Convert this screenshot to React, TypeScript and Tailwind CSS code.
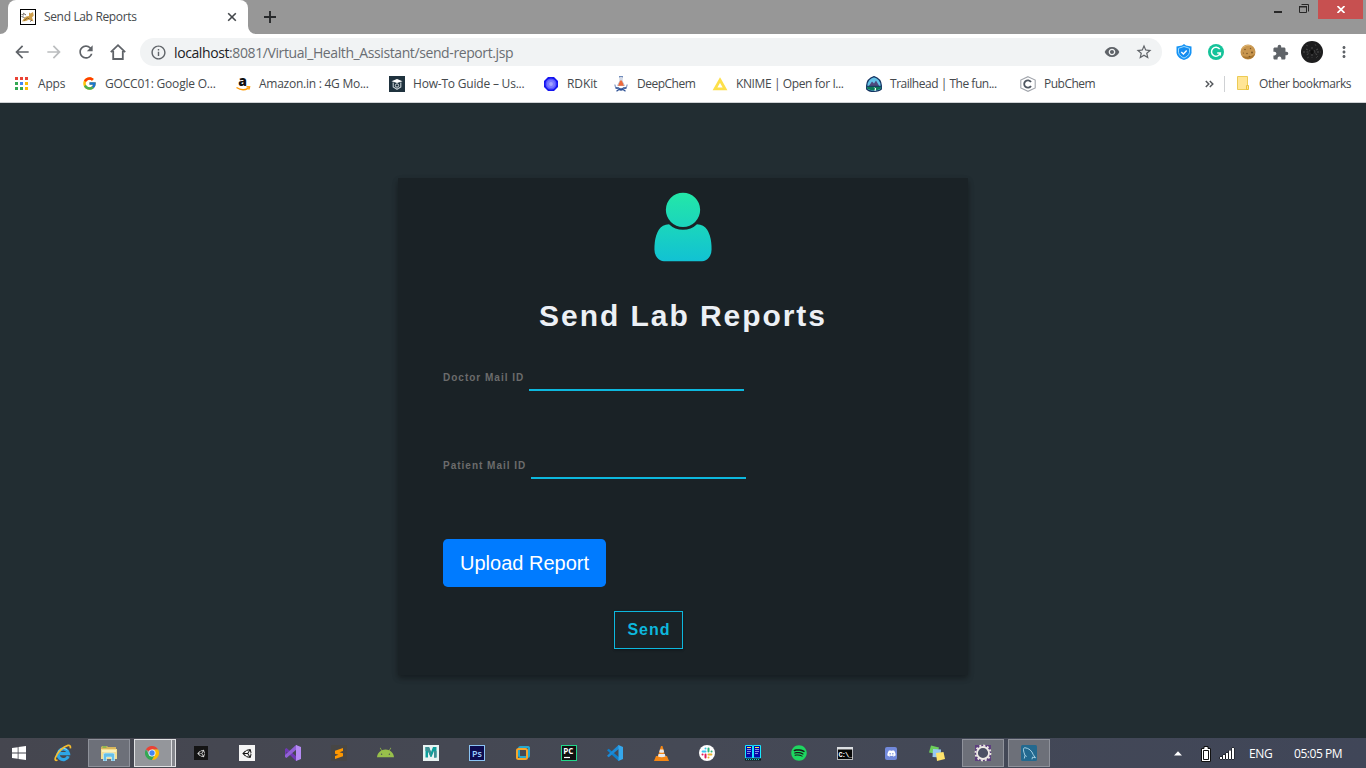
import type { ReactNode } from "react";
import {
  MdArrowBack,
  MdArrowForward,
  MdRefresh,
  MdInfoOutline,
  MdRemoveRedEye,
  MdStarBorder,
  MdExtension,
  MdMoreVert,
} from "react-icons/md";
import { FcGoogle } from "react-icons/fc";
import { FaAndroid, FaDiscord, FaSpotify, FaUnity } from "react-icons/fa";

/* ---------- browser chrome ---------- */

function TomcatIcon() {
  return (
    <svg width="16" height="16" viewBox="0 0 16 16" className="shrink-0">
      <rect x="0.5" y="0.5" width="15" height="15" fill="#fff" stroke="#000" />
      <path d="M2 12.500l1.500-2.500 2.500-2.500 3-.5V3.500l1.500 1L13 3l.7 3.500-1.700 2 1.500 4-2.500-1-2-1-3 1.500z" fill="#cf9f4c" />
      <path d="M1.500 5.500l2.500.5M1.500 7.500l3 1M10 12.500l2-1.500M3 4l3 2" stroke="#5a5148" strokeWidth="0.9" />
      <path d="M4 11.500l3.500-2.500 2 1" stroke="#7d5c22" strokeWidth="0.9" fill="none" />
    </svg>
  );
}

function TabStrip() {
  return (
    <div className="flex h-[34px] bg-[#979797]">
      <svg width="8" height="34" className="shrink-0">
        <path d="M0 34a8 8 0 0 0 8-8v8z" fill="#fff" />
      </svg>
      <div className="flex h-[34px] w-[240px] shrink-0 items-center rounded-t-lg bg-white pl-3">
        <TomcatIcon />
        <span className="ml-2 w-[183px] text-[12px] tracking-[-0.35px] text-[#45494d]">Send Lab Reports</span>
        <svg width="10" height="10" viewBox="0 0 10 10" className="shrink-0">
          <path d="M1.200 1.200l7.600 7.600M8.800 1.200L1.200 8.800" stroke="#43474b" strokeWidth="1.6" />
        </svg>
      </div>
      <svg width="8" height="34" className="shrink-0">
        <path d="M0 26a8 8 0 0 0 8 8H0z" fill="#fff" />
      </svg>
      <svg width="12" height="12" viewBox="0 0 12 12" className="mt-[11px] ml-2 shrink-0">
        <path d="M6 0v12M0 6h12" stroke="#27292b" strokeWidth="1.9" />
      </svg>
      <div className="ml-auto flex pr-[3px]">
        <svg width="44" height="20" viewBox="0 0 44 20">
          <path d="M0 11h8v2H0z" fill="#272727" />
          <path d="M25.500 6.500h7v6h-7zM27.500 4.500h7v7" fill="none" stroke="#272727" />
          <path d="M25 6h8v1.500h-8z" fill="#272727" />
        </svg>
        <div className="flex h-[19px] w-[45px] items-center justify-center bg-[#c75050]">
          <svg width="8" height="7" viewBox="0 0 8 7">
            <path d="M.5 0l7 7M7.500 0l-7 7" stroke="#fff" strokeWidth="1.7" />
          </svg>
        </div>
      </div>
    </div>
  );
}

function ShieldIcon() {
  return (
    <svg width="16" height="16" viewBox="0 0 16 16">
      <path d="M8 0l2 1.500 5.500 1V9c-1 4-4 6-7.500 7C4.500 15 1.500 13 .5 9V2.500l5.500-1z" fill="#1593f5" />
      <path d="M8 2.500l5.500 1.800V8.500c-.8 3-3 4.500-5.500 5.500-2.500-1-4.700-2.500-5.500-5.500V4.300z" fill="#158cf0" stroke="#a8e2ff" strokeWidth="0.9" />
      <path d="M5.300 8l2.100 2 3.300-3.500" stroke="#fff" strokeWidth="1.400" fill="none" />
    </svg>
  );
}

function CookieIcon() {
  return (
    <svg width="16" height="16" viewBox="0 0 16 16">
      <circle cx="8" cy="8" r="7.500" fill="#c8964f" />
      <path d="M1 6a7.500 7.500 0 0 1 12-3 9 9 0 0 0-12 3z" fill="#e2ba77" />
      <path d="M2 12a7.500 7.500 0 0 0 13-2q-5 4-13 2z" fill="#a8752f" />
      <g fill="#7d5726">
        <circle cx="5" cy="5.500" r="0.800" />
        <circle cx="10.500" cy="4.500" r="0.700" />
        <circle cx="12" cy="8.500" r="1" />
        <circle cx="7" cy="9.500" r="0.800" />
        <circle cx="3.500" cy="9" r="0.600" />
        <circle cx="9.500" cy="12.500" r="0.800" />
      </g>
    </svg>
  );
}

function Toolbar() {
  return (
    <div className="flex h-9 items-center bg-white pl-3">
      <MdArrowBack size={20} color="#5f6368" />
      <MdArrowForward size={20} color="#bbbdbf" className="ml-3" />
      <MdRefresh size={20} color="#5f6368" className="ml-3" />
      <svg width="20" height="20" viewBox="0 0 20 20" className="ml-3">
        <path d="M2.800 10.200L10 3.200l7.200 7M5.200 9v8h9.600V9" fill="none" stroke="#5f6368" strokeWidth="1.800" />
      </svg>
      <div className="ml-3 flex h-7 w-[1022px] shrink-0 items-center rounded-full bg-[#f1f3f4] pl-[10px]">
        <MdInfoOutline size={17} color="#5f6368" className="shrink-0" />
        <span className="ml-[7px] w-[930px] shrink-0 text-[14px] whitespace-nowrap tracking-[-0.4px] text-[#6a6e73]">
          <span className="text-[#202124]">localhost</span>:8081/Virtual_Health_Assistant/send-report.jsp
        </span>
        <MdRemoveRedEye size={16} color="#5f6368" className="shrink-0" />
        <MdStarBorder size={18} color="#5f6368" className="ml-[15px] shrink-0" />
      </div>
      <div className="ml-[14px] flex items-center gap-4">
        <ShieldIcon />
        <svg width="16" height="16" viewBox="0 0 16 16">
          <circle cx="8" cy="8" r="8" fill="#15c39a" />
          <path d="M11.700 5.200A4.500 4.500 0 1 0 12.300 9H9.200M12.300 8.800v2.700" fill="none" stroke="#fff" strokeWidth="1.500" />
        </svg>
        <CookieIcon />
        <MdExtension size={17} color="#5f6368" />
      </div>
      <svg width="22" height="22" viewBox="0 0 22 22" className="ml-3">
        <circle cx="11" cy="11" r="11" fill="#1d1d1e" />
        <g stroke="#5c5c5c" strokeWidth="0.800">
          <path d="M2 11h18M11 6v11M5 8l12 6M17 8L5 14" strokeDasharray="2 1.500" />
        </g>
        <circle cx="11" cy="11" r="2" fill="#0c0c0c" />
        <path d="M5 4l2 1M14 3l1 2M6 17l2-1M15 17l2-2" stroke="#3b3b3b" />
      </svg>
      <MdMoreVert size={18} color="#5f6368" className="ml-[12px]" />
    </div>
  );
}

function AppsIcon() {
  const colors = ["#ea4335", "#ea4335", "#ea4335", "#34a853", "#4285f4", "#fbbc04", "#34a853", "#34a853", "#fbbc04"];
  return (
    <svg width="16" height="16" viewBox="0 0 16 16">
      {colors.map((c, i) => (
        <rect key={i} x={1 + (i % 3) * 5} y={1 + Math.floor(i / 3) * 5} width="3" height="3" fill={c} />
      ))}
    </svg>
  );
}

function AmazonIcon() {
  return (
    <svg width="16" height="16" viewBox="0 0 16 16" className="overflow-visible">
      <text x="3.200" y="9.500" fontSize="14" fontWeight="800" fontFamily="Open Sans, sans-serif" fill="#111">
        a
      </text>
      <path d="M1.500 11.500q6 4 11.500.8M11.500 10.700l3 .2-.8 2.600" fill="none" stroke="#f90" strokeWidth="1.500" />
    </svg>
  );
}

function HowToIcon() {
  return (
    <svg width="16" height="16" viewBox="0 0 16 16">
      <rect width="16" height="16" fill="#1f323e" />
      <path d="M2.500 5.200L8 3l5.500 2.200L8 7z" fill="#fff" />
      <path d="M4.200 6.500V11L8 13.300l3.800-2.300V6.500" fill="none" stroke="#c5cfd4" strokeWidth="1.100" />
      <circle cx="8" cy="9.500" r="1.700" fill="none" stroke="#d5dde1" strokeWidth="1" />
    </svg>
  );
}

function RdkitIcon() {
  return (
    <svg width="16" height="16" viewBox="0 0 16 16">
      <path d="M5 1h6l4 4v6l-4 4H5l-4-4V5z" fill="#1414f0" />
      <circle cx="8" cy="8" r="5.500" fill="#5555ff" />
      <circle cx="8" cy="8" r="4" fill="#7878ff" />
      <circle cx="8" cy="8" r="1.900" fill="#a4a4ff" />
    </svg>
  );
}

function DeepChemIcon() {
  return (
    <svg width="16" height="16" viewBox="0 0 16 16">
      <path d="M6 .8h4" stroke="#4b6eac" strokeWidth="1.200" />
      <path d="M7 1v4L4.500 9.500h7L9 5V1" fill="#eef1f6" stroke="#a9b5cb" strokeWidth="0.800" />
      <path d="M7.200 4.500L5 9.800h6L8.800 4.500z" fill="#ee6a3c" />
      <path d="M1.800 8.500q.5 3.500 3 4.500M14.200 8.500q-.5 3.500-3 4.500" fill="none" stroke="#8ea3c9" strokeWidth="1.300" />
      <path d="M2.500 12h3q2.500 2 5 0h3M3.500 15.200l2.500-1.700q2 1 4 0l2.500 1.700" fill="none" stroke="#2e5296" strokeWidth="1.300" />
    </svg>
  );
}

function KnimeIcon() {
  return (
    <svg width="16" height="16" viewBox="0 0 16 16">
      <path d="M8 4l5 8.800H3z" fill="#fff" stroke="#fde04a" strokeWidth="2.800" />
    </svg>
  );
}

function TrailheadIcon() {
  return (
    <svg width="16" height="16" viewBox="0 0 16 16">
      <path d="M.7 13V9.500C1 5 4 2 8 .7c4 1.300 7 4.300 7.300 8.800V13q-2 2.200-7.300 2.300T.7 13z" fill="#64c2e8" stroke="#143462" strokeWidth="1.300" />
      <path d="M2.500 10.500L6 5.500l2 2 2-3 3.500 6z" fill="#4f4a7e" />
      <path d="M1.200 10.500q7-1 13.600 0v2.300q-6.500 3.500-13.600 0z" fill="#0b7b57" />
      <path d="M1 10.300h14" stroke="#143462" strokeWidth="1" />
      <path d="M7.500 11l1.500 1.500-.7 2.300h1.500l.3-2.600z" fill="#fff" />
    </svg>
  );
}

function PubChemIcon() {
  return (
    <svg width="16" height="16" viewBox="0 0 16 16">
      <path d="M8 .7l7.200 3.300v8l-7.200 3.300L.8 12V4z" fill="none" stroke="#a0a4ab" strokeWidth="1.100" />
      <path d="M11 6A3.700 3.700 0 1 0 11 10" fill="none" stroke="#4e5661" strokeWidth="1.800" />
    </svg>
  );
}

function Bookmark({ icon, className, label }: { icon: ReactNode; className: string; label: string }) {
  return (
    <div className={`flex shrink-0 items-center gap-2 whitespace-nowrap ${className}`}>
      <span className="flex size-4 shrink-0 items-center justify-center">{icon}</span>
      <span>{label}</span>
    </div>
  );
}

function BookmarksBar() {
  return (
    <div className="flex h-[33px] items-center border-b border-[#cfd1d4] bg-white pb-[5px] pl-[14px] text-[12px] text-[#45494d]">
      <Bookmark icon={<AppsIcon />} className="w-[67px] tracking-[-0.2px]" label="Apps" />
      <Bookmark icon={<FcGoogle size={15} />} className="w-[154px] tracking-[-0.2px]" label="GOCC01: Google O..." />
      <Bookmark icon={<AmazonIcon />} className="w-[154px] tracking-[-0.25px]" label="Amazon.in : 4G Mo..." />
      <Bookmark icon={<HowToIcon />} className="w-[154px] tracking-[-0.2px]" label="How-To Guide – Us..." />
      <Bookmark icon={<RdkitIcon />} className="w-[70px] tracking-[-0.1px]" label="RDKit" />
      <Bookmark icon={<DeepChemIcon />} className="w-[99px] tracking-[-0.5px]" label="DeepChem" />
      <Bookmark icon={<KnimeIcon />} className="w-[154px] tracking-[-0.4px]" label="KNIME | Open for I..." />
      <Bookmark icon={<TrailheadIcon />} className="w-[154px] tracking-[-0.48px]" label="Trailhead | The fun..." />
      <Bookmark icon={<PubChemIcon />} className="w-[185px] tracking-[-0.5px]" label="PubChem" />
      <svg width="9" height="8" viewBox="0 0 9 8" className="shrink-0">
        <path d="M.8 1l3 3-3 3M4.800 1l3 3-3 3" fill="none" stroke="#55595d" strokeWidth="1.500" />
      </svg>
      <div className="ml-[10px] h-4 w-px shrink-0 bg-[#cfd1d4]" />
      <Bookmark
        icon={
          <svg width="14" height="15" viewBox="0 0 14 15">
            <path d="M1.500.5h10v13h-10z" fill="#ffe595" stroke="#eccb55" />
            <path d="M10.500 9.500h2v4h-2z" fill="#ffe595" stroke="#e8c03a" />
          </svg>
        }
        className="ml-[10px] tracking-[-0.43px]"
        label="Other bookmarks"
      />
    </div>
  );
}

/* ---------- page ---------- */

function UserIcon() {
  return (
    <svg width="80" height="80" viewBox="0 0 1792 1792">
      <defs>
        <linearGradient id="userFill" gradientUnits="userSpaceOnUse" x1="0" y1="-186" x2="0" y2="2054">
          <stop offset="0" stopColor="#27ef9f" />
          <stop offset="1" stopColor="#0db8de" />
        </linearGradient>
      </defs>
      <path
        fill="url(#userFill)"
        d="M1536 1399q0 109-62.500 187t-150.500 78h-854q-88 0-150.500-78t-62.500-187q0-85 8.500-160.500t31.500-152 58.500-131 94-89 134.500-34.500q131 128 313 128t313-128q76 0 134.500 34.500t94 89 58.500 131 31.500 152 8.500 160.500zm-256-887q0 159-112.500 271.500t-271.500 112.500-271.500-112.500-112.500-271.500 112.500-271.500 271.500-112.500 271.500 112.500 112.500 271.500z"
      />
    </svg>
  );
}

function Field({ id, label }: { id: string; label: string }) {
  return (
    <div className="flex h-[88px] items-start">
      <label htmlFor={id} className="pt-[11px] text-[10px] leading-[15px] font-bold tracking-[1px] whitespace-nowrap text-[#6c6c6c]">
        {label}
      </label>
      <input id={id} type="text" className="ml-[5px] h-8 w-[215px] border-b-2 border-[#0db8de] bg-transparent outline-none" />
    </div>
  );
}

function Page() {
  return (
    <main className="flex h-[635px] justify-center bg-[#222d32] pt-[75px] font-['Liberation_Sans',Arial,sans-serif]">
      <section className="flex h-[497px] w-[570px] flex-col bg-[#1a2226] shadow-[0_3px_6px_rgba(0,0,0,0.16),0_3px_6px_rgba(0,0,0,0.23)]">
        <div className="flex h-[100px] justify-center pt-[8.5px]">
          <UserIcon />
        </div>
        <h1 className="mt-[15px] text-center text-[30px] leading-[45px] font-bold tracking-[1.95px] text-[#ecf0f5]">Send Lab Reports</h1>
        <form className="mt-[21px] flex flex-col items-start pl-[45px]">
          <Field id="doctor" label="Doctor Mail ID" />
          <Field id="patient" label="Patient Mail ID" />
          <button type="button" className="mt-[4px] h-12 w-[163px] rounded-[4.8px] bg-[#007bff] text-[20px] leading-[30px] whitespace-nowrap text-white">
            Upload Report
          </button>
          <button
            type="button"
            className="mt-6 ml-[171px] h-[38px] w-[69px] border border-[#0db8de] pl-px text-[16px] font-bold tracking-[1px] text-[#0db8de] shadow-[0_1px_3px_rgba(0,0,0,0.12),0_1px_2px_rgba(0,0,0,0.24)]"
          >
            Send
          </button>
        </form>
      </section>
    </main>
  );
}

/* ---------- taskbar ---------- */

function WindowsIcon() {
  return (
    <svg width="14" height="14" viewBox="0 0 14 14">
      <path d="M0 2l5.700-.8v5.400H0zM6.500 1.100L14 0v6.600H6.500zM0 7.400h5.700v5.400L0 12zM6.500 7.400H14V14l-7.500-1.100z" fill="#fff" />
    </svg>
  );
}

function ExplorerBrowserIcon() {
  return (
    <svg width="18" height="18" viewBox="0 0 18 18">
      <path d="M14.300 12.200A5.300 5.300 0 1 1 14.600 9.600H5.500" fill="none" stroke="#2ea6e6" strokeWidth="3.200" />
      <path d="M4.300 8A5.300 5.300 0 0 1 13.300 6.200" fill="none" stroke="#90dcfb" strokeWidth="1" />
      <path d="M3.500 16Q.3 17.200 1.500 13.500M1.500 13.500C3 9 9 2.500 14 1.400q3-.5 2.300 3" fill="none" stroke="#f5bd2f" strokeWidth="1.700" />
    </svg>
  );
}

function FolderIcon() {
  return (
    <svg width="18" height="16" viewBox="0 0 18 16">
      <path d="M1 2.500L2 1h5l1 1h8v11H1z" fill="#d8b65c" />
      <path d="M2.500 1.500h4v1h-4z" fill="#47b64b" />
      <path d="M1 4h16v10H1z" fill="#f4de90" />
      <path d="M2 5h14v2H2z" fill="#fbf0ba" />
      <path d="M3.500 16V9.500q0-1.500 1.500-1.500h8q1.500 0 1.500 1.500V16h-3v-4h-5v4z" fill="#65bfe8" stroke="#c4edff" strokeWidth="0.700" />
    </svg>
  );
}

function ChromeIcon() {
  return (
    <svg width="14" height="14" viewBox="0 0 48 48">
      <path d="M24 24L3.200 12A24 24 0 0 1 44.800 12H24z" fill="#ea4335" />
      <path d="M24 48A24 24 0 0 1 3.200 12L13.600 30 24 36l10.400-6z" fill="#34a853" />
      <path d="M24 12h20.800A24 24 0 0 1 24 48l10.400-18z" fill="#fbbc05" />
      <circle cx="24" cy="24" r="12" fill="#fff" />
      <circle cx="24" cy="24" r="9.300" fill="#4285f4" />
    </svg>
  );
}

function VisualStudioIcon() {
  return (
    <svg width="16" height="16" viewBox="0 0 16 16">
      <path d="M0 4l1.500-1L12 12v3.500L11 16 1.500 6.500v4L0 12z" fill="#6f38b4" />
      <path d="M0 12l1.500 1L12 4V.3L11 0 0 10z" fill="#9160d6" />
      <path d="M11 0l5 2v12l-5 2z" fill="#b58af3" />
    </svg>
  );
}

function SublimeIcon() {
  return (
    <svg width="16" height="16" viewBox="0 0 16 16">
      <rect width="16" height="16" rx="1" fill="#474645" />
      <path d="M4 5.700L12 3v3L8.500 7.200 12 8.300v3L4 14v-3l3.500-1.200L4 8.700z" fill="#ff9800" />
    </svg>
  );
}

function MayaIcon() {
  return (
    <svg width="16" height="16" viewBox="0 0 16 16">
      <rect width="16" height="16" fill="#e8f3f2" />
      <path d="M2.500 2H6l2 5 2-5h3.500v10.500H11V6l-2.500 6h-1L5 6v6.500H2.500z" fill="#0c9f9b" />
      <path d="M2.500 2H6l2 5-.5 5L5 6H2.500zM11 6h2.500v6.500H11z" fill="#3f8f93" />
    </svg>
  );
}

function PhotoshopIcon() {
  return (
    <svg width="16" height="16" viewBox="0 0 16 16">
      <rect x="0.500" y="0.500" width="15" height="15" fill="#0c0c50" stroke="#8bc4f5" />
      <text x="3" y="11.500" fontSize="9" fontWeight="600" fontFamily="Open Sans, sans-serif" fill="#9bd0ff">
        Ps
      </text>
    </svg>
  );
}

function VmwareIcon() {
  return (
    <svg width="16" height="16" viewBox="0 0 16 16" fill="none">
      <rect x="4" y="2" width="10" height="10" rx="1.500" stroke="#25a8cf" strokeWidth="2" />
      <rect x="2" y="4" width="10" height="10" rx="1.500" stroke="#f5a52a" strokeWidth="2" />
      <path d="M7 2h5.500Q14 2 14 3.500V9" stroke="#25a8cf" strokeWidth="2" />
    </svg>
  );
}

function PyCharmIcon() {
  return (
    <svg width="16" height="16" viewBox="0 0 16 16">
      <rect x="0.500" y="0.500" width="15" height="15" fill="#101010" stroke="#21d789" />
      <text x="2.300" y="9" fontSize="8" fontWeight="700" fontFamily="Open Sans, sans-serif" fill="#fff">
        PC
      </text>
      <path d="M3 12.500h6" stroke="#fff" strokeWidth="1.200" />
    </svg>
  );
}

function CodeIcon() {
  return (
    <svg width="16" height="16" viewBox="0 0 16 16">
      <path d="M0 5.300l1.700-1.500L12 12.200V16h-.5z" fill="#0f7fcb" />
      <path d="M0 10.700l1.700 1.500L12 3.800V0h-.5z" fill="#1c8ad6" />
      <path d="M11.500 0L16 2v12l-4.500 2z" fill="#35a7ec" />
    </svg>
  );
}

function VlcIcon() {
  return (
    <svg width="15" height="17" viewBox="0 0 15 17">
      <path d="M2 11h11l2 5H0z" fill="#f58714" />
      <path d="M7 1h1.500l3 11.500q-4 1.800-8 0z" fill="#f58714" />
      <path d="M5.900 4.500h3.500l.8 2.700q-2.500 1-5 0zM4.600 9h6.300l.6 2.500q-3.800 1.500-7.500 0z" fill="#e9e9ec" />
    </svg>
  );
}

function SlackIcon() {
  return (
    <svg width="16" height="16" viewBox="0 0 16 16">
      <circle cx="8" cy="8" r="8" fill="#fff" />
      <g strokeWidth="2" strokeLinecap="round">
        <path d="M6.500 3.500v.1M3.600 6.500h2.900" stroke="#36c5f0" />
        <path d="M9.500 3.600v2.900M12.500 6.500h.1" stroke="#2eb67d" />
        <path d="M9.500 9.500h2.900M9.500 12.500v.1" stroke="#ecb22e" />
        <path d="M3.500 9.500h.1M6.500 9.500v2.900" stroke="#e01e5a" />
      </g>
    </svg>
  );
}

function BookIcon() {
  return (
    <svg width="16" height="16" viewBox="0 0 16 16">
      <path d="M.5.500h7v12.500h-7zM8.500.500h7v12.500h-7z" fill="#0808a8" stroke="#18e8ff" />
      <path d="M2 2.500h4M10 2.500h4" stroke="#ffef3a" />
      <path d="M2 4.500h4M2 6.500h4M2 8.500h3M10 4.500h4M10 6.500h4M10 8.500h3" stroke="#9fb4f0" strokeWidth="0.800" />
      <path d="M0 14.500h16" stroke="#081818" strokeWidth="2" />
      <path d="M1 14.500h14" stroke="#18c8d0" strokeDasharray="1 1" />
    </svg>
  );
}

function TerminalIcon() {
  return (
    <svg width="16" height="13" viewBox="0 0 16 13">
      <rect x="0.500" y="0.500" width="15" height="12" fill="#050505" stroke="#b4b6ba" />
      <path d="M0 0h16v2.500H0z" fill="#dcdfe3" />
      <text x="1.500" y="9.500" fontSize="7" fontWeight="700" fontFamily="Liberation Mono, monospace" letterSpacing="-0.900" fill="#fff">
        C:\_
      </text>
    </svg>
  );
}

function NotesIcon() {
  return (
    <svg width="16" height="16" viewBox="0 0 16 16">
      <path d="M2 .5l8 2-2 6.500-8-1.500z" fill="#6ccf5b" />
      <path d="M4 4l8 .5-.5 8-8-.5z" fill="#98c9f1" />
      <path d="M7 8l7.500-1L16 14l-8 2z" fill="#ffe46c" />
    </svg>
  );
}

function GearRingIcon() {
  return (
    <svg width="18" height="18" viewBox="0 0 18 18" fill="none">
      <rect x="1" y="1" width="16" height="16" fill="#5d407e" />
      <circle cx="9" cy="9" r="7.500" stroke="#e8e5e0" strokeWidth="1.800" strokeDasharray="2 1.927" />
      <circle cx="9" cy="9" r="6" fill="#4c5064" stroke="#eeebe6" strokeWidth="1.800" />
    </svg>
  );
}

function DolphinIcon() {
  return (
    <svg width="16" height="16" viewBox="0 0 16 16">
      <rect width="16" height="16" rx="1.500" fill="#23698f" />
      <path d="M3.300 13.500L4 10.500Q1 3 3.800 2.700 10 3.500 12.300 9.800l2.200 3-3-.7-.5 2.200M4.200 10.500l1.500 1" fill="none" stroke="#b3d9ea" strokeWidth="0.900" />
    </svg>
  );
}

function Task({ children, open = false }: { children: ReactNode; open?: boolean }) {
  return (
    <div
      className={
        open
          ? "flex h-7 w-[42px] shrink-0 items-center justify-center border border-[#8f929b] bg-[#6d7079]"
          : "flex h-7 w-[42px] shrink-0 items-center justify-center"
      }
    >
      {children}
    </div>
  );
}

function Taskbar() {
  return (
    <footer className="flex h-[30px] items-center bg-linear-to-r from-[#45464f] via-[#454955] to-[#404658]">
      <div className="flex items-center gap-1">
        <div className="flex w-[38px] justify-center">
          <WindowsIcon />
        </div>
        <Task>
          <ExplorerBrowserIcon />
        </Task>
        <Task open>
          <FolderIcon />
        </Task>
        <div className="flex h-7 w-[42px] shrink-0">
          <div className="flex w-[38px] items-center justify-center border border-[#e0e1e3] bg-[#94969b] pr-[2px]">
            <ChromeIcon />
          </div>
          <div className="w-1 border border-l-0 border-[#e0e1e3] bg-[#85878d]" />
        </div>
        <Task>
          <div className="flex size-[14px] items-center justify-center bg-[#141414]">
            <FaUnity size={9} color="#d8d8d8" />
          </div>
        </Task>
        <Task>
          <div className="flex size-4 items-center justify-center bg-[#f4f4f4]">
            <FaUnity size={11} color="#111" />
          </div>
        </Task>
        <Task>
          <VisualStudioIcon />
        </Task>
        <Task>
          <SublimeIcon />
        </Task>
        <Task>
          <FaAndroid size={17} color="#98c04b" />
        </Task>
        <Task>
          <MayaIcon />
        </Task>
        <Task>
          <PhotoshopIcon />
        </Task>
        <Task>
          <VmwareIcon />
        </Task>
        <Task>
          <PyCharmIcon />
        </Task>
        <Task>
          <CodeIcon />
        </Task>
        <Task>
          <VlcIcon />
        </Task>
        <Task>
          <SlackIcon />
        </Task>
        <Task>
          <BookIcon />
        </Task>
        <Task>
          <div className="flex size-[14px] items-center justify-center rounded-full bg-[#191919]">
            <FaSpotify size={16} color="#1ed760" className="shrink-0" />
          </div>
        </Task>
        <Task>
          <TerminalIcon />
        </Task>
        <Task>
          <div className="flex h-[13px] w-3 items-center justify-center rounded-[2px] bg-[#7289da]">
            <FaDiscord size={9} color="#fff" />
          </div>
        </Task>
        <Task>
          <NotesIcon />
        </Task>
        <Task open>
          <GearRingIcon />
        </Task>
        <Task open>
          <DolphinIcon />
        </Task>
      </div>
      <div className="ml-auto flex h-[30px] w-[192px] items-center pt-px text-[12px] text-white">
        <svg width="8" height="5" viewBox="0 0 8 5">
          <path d="M0 4.500L4 .3l4 4.200z" fill="#fff" />
        </svg>
        <svg width="10" height="16" viewBox="0 0 10 16" className="ml-[19px]">
          <path d="M3 .5h4v2h2.500v13h-9v-13H3z" fill="#fff" stroke="#111" />
          <path d="M2.500 4.500h5v9h-5z" fill="#fff" stroke="#111" />
        </svg>
        <svg width="16" height="13" viewBox="0 0 16 13" className="ml-2">
          <path d="M1 10h2v2H1zM4 8h2v4H4zM7 6h2v6H7zM10 3.500h2V12h-2zM13 1h2v11h-2z" fill="#fff" stroke="#111" strokeWidth="1" paintOrder="stroke" />
        </svg>
        <span className="ml-[14px] w-[45px] tracking-[-0.35px]">ENG</span>
        <span className="whitespace-nowrap tracking-[-0.45px]">05:05 PM</span>
      </div>
    </footer>
  );
}

export default function App() {
  return (
    <div className="h-[768px] w-[1366px] overflow-hidden font-['Open_Sans','Noto_Sans',sans-serif]">
      <TabStrip />
      <Toolbar />
      <BookmarksBar />
      <Page />
      <Taskbar />
    </div>
  );
}
